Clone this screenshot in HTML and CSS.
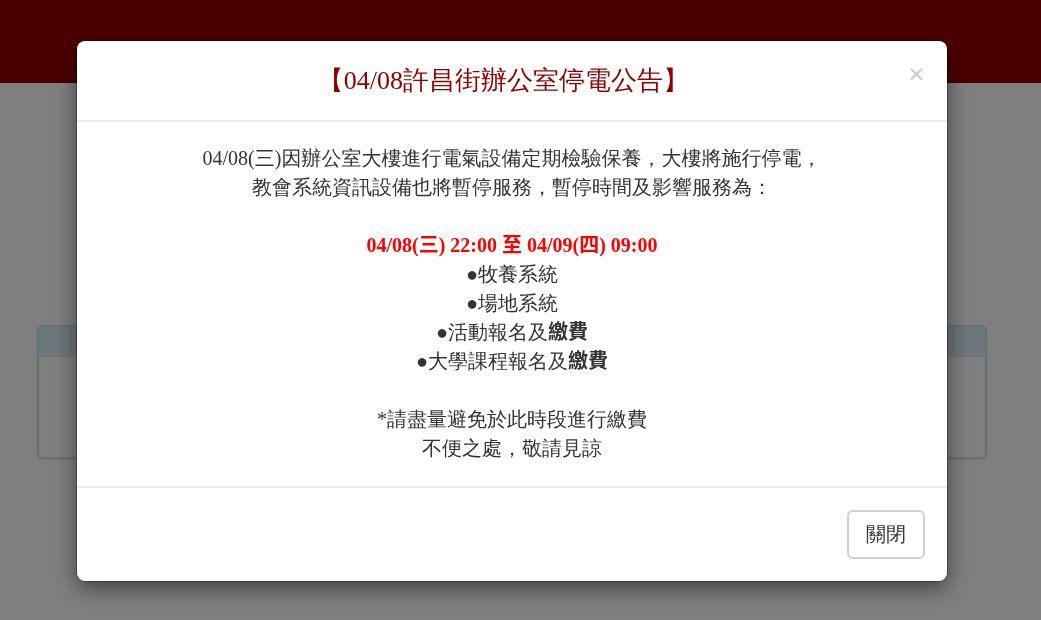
FILE: index.html
```html
<!DOCTYPE html>
<html lang="zh-Hant">
<head>
<meta charset="utf-8">
<meta name="viewport" content="width=device-width, initial-scale=1">
<title>停電公告</title>
<link rel="stylesheet" href="styles.css">
</head>
<body>
<header class="site-header"></header>
<main class="page">
  <section class="panel">
    <div class="panel-heading"></div>
    <div class="panel-body"></div>
  </section>
</main>
<div class="backdrop">
  <div class="modal" role="dialog" aria-modal="true" aria-labelledby="notice-title">
    <div class="modal-header">
      <h4 class="modal-title" id="notice-title">【04/08許昌街辦公室停電公告】</h4>
      <button class="close" type="button" aria-label="關閉視窗">×</button>
    </div>
    <div class="modal-body">
      04/08(三)因辦公室大樓進行電氣設備定期檢驗保養，大樓將施行停電，<br>
      教會系統資訊設備也將暫停服務，暫停時間及影響服務為：<br>
      <br>
      <strong class="period">04/08(三) 22:00 至 04/09(四) 09:00</strong><br>
      ●牧養系統<br>
      ●場地系統<br>
      ●活動報名及<strong>繳費</strong><br>
      ●大學課程報名及<strong>繳費</strong><br>
      <br>
      *請盡量避免於此時段進行繳費<br>
      不便之處，敬請見諒
    </div>
    <div class="modal-footer">
      <button class="btn" type="button">關閉</button>
    </div>
  </div>
</div>
</body>
</html>
```
FILE: styles.css
```css
* {
  box-sizing: border-box;
}

body {
  margin: 0;
  min-height: 100vh;
  background: #fff;
  color: #333;
  font-family: "Liberation Serif", "Droid Sans Fallback", "WenQuanYi Zen Hei", "WenQuanYi Micro Hei", "Noto Sans CJK TC", serif;
  font-size: 20px;
  line-height: 29px;
}

strong {
  font-family: "Liberation Serif", "Noto Sans CJK TC", serif;
  font-weight: 700;
}

.site-header {
  height: 83px;
  background: #960000;
}

.page {
  padding: 242px 54px 0 37px;
}

.panel {
  border: 2px solid #bce8f1;
  border-radius: 6px;
  box-shadow: 0 1px 2px rgba(0, 0, 0, 0.1);
}

.panel-heading {
  height: 30px;
  background: #d9edf7;
  border-radius: 4px 4px 0 0;
}

.panel-body {
  height: 100px;
}

.backdrop {
  position: fixed;
  inset: 0;
  overflow: hidden;
  padding: 41px 17px 0 0;
  background: rgba(0, 0, 0, 0.5);
}

.modal {
  width: 85%;
  max-width: 870px;
  margin: 0 auto;
  background: #fff;
  border-radius: 8px;
  box-shadow: 0 0 1px 1px rgba(0, 0, 0, 0.3), 0 7px 22px rgba(0, 0, 0, 0.5);
}

.modal-header {
  display: flex;
  align-items: flex-start;
  padding: 22px 22px 21px;
  border-bottom: 2px solid #ebebeb;
}

.modal-title {
  flex: 1;
  margin: 0;
  color: #900000;
  font-size: 26px;
  font-weight: 400;
  line-height: 36px;
  text-align: center;
}

.close {
  padding: 0;
  border: 0;
  background: none;
  color: #ccc;
  font-family: "Liberation Serif", serif;
  font-size: 30px;
  font-weight: 700;
  line-height: 22px;
  cursor: pointer;
}

.modal-body {
  padding: 22px 22px 23px;
  text-align: center;
}

.period {
  color: #f00;
}

.modal-footer {
  padding: 22px;
  border-top: 2px solid #ebebeb;
  text-align: right;
}

.btn {
  display: block;
  margin-left: auto;
  padding: 8px 17px;
  border: 2px solid #d2d2d2;
  border-radius: 6px;
  background: #fff;
  color: #333;
  font: inherit;
  cursor: pointer;
}
```
